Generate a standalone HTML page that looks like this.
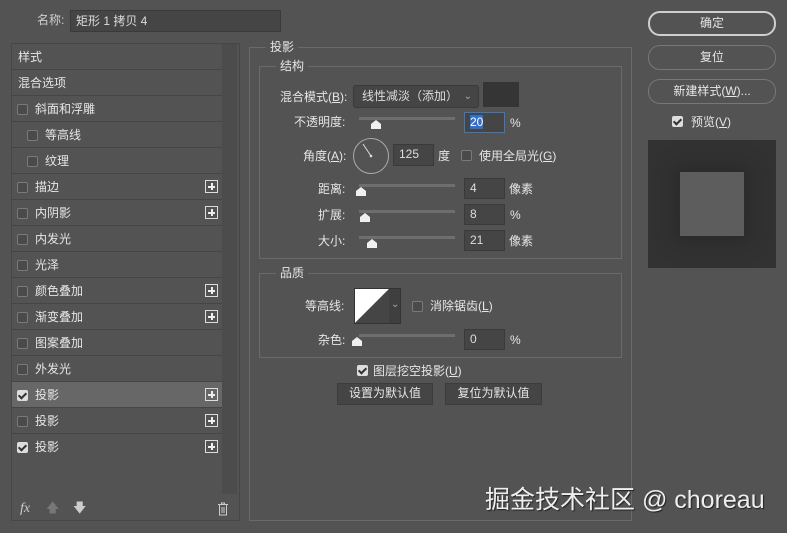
<!DOCTYPE html>
<html><head><meta charset="utf-8"><style>
*{box-sizing:border-box;margin:0;padding:0}
body{width:787px;height:533px;background:#535353;font-family:"Liberation Sans","Noto Sans CJK SC",sans-serif;font-size:12px;color:#e6e6e6;position:relative;overflow:hidden}
.a{position:absolute}
.t{position:absolute;white-space:nowrap;line-height:14px}
.inp{position:absolute;background:#454545;border:1px solid #3a3a3a;color:#ddd;padding-left:5px;line-height:19px;font-size:12px}
.row{position:absolute;left:12px;width:210px;height:26px;border-bottom:1px solid #454545;line-height:26px;padding-left:6px}
.cb{position:absolute;width:11px;height:11px;border:1px solid #7a7a7a;border-radius:2px;background:#4a4a4a}
.cbc{position:absolute;width:11px;height:11px;border-radius:2px;background:#ddd}
.cbc:after{content:"";position:absolute;left:3px;top:1px;width:3px;height:6px;border:solid #333;border-width:0 2px 2px 0;transform:rotate(45deg)}
.plus{position:absolute;right:4px;top:6px;width:13px;height:13px;border:1px solid #ddd}
.plus:before{content:"";position:absolute;left:2px;top:5px;width:7px;height:1.5px;background:#eee}
.plus:after{content:"";position:absolute;left:5px;top:2px;width:1.5px;height:7px;background:#eee}
.box{position:absolute;border:1px solid #6a6a6a}
.sl{position:absolute;height:3px;background:#6e6e6e;width:96px}
.th{position:absolute;width:0;height:0;border-left:5px solid transparent;border-right:5px solid transparent;border-bottom:4px solid #f0f0f0}
.th:after{content:"";position:absolute;left:-5px;top:4px;width:10px;height:5px;background:#f0f0f0}
.btn{position:absolute;border:1px solid #8a8a8a;border-radius:12px;text-align:center;line-height:22px;font-size:12px}
.b2{position:absolute;background:#454545;border:1px solid #3c3c3c;text-align:center;line-height:19px}
</style></head><body>
<div class="t" style="left:37px;top:13px;color:#cfcfcf">名称:</div>
<div class="inp" style="left:70px;top:10px;width:211px;height:22px;line-height:20px">矩形 1 拷贝 4</div>

<div class="a" style="left:11px;top:43px;width:229px;height:478px;border:1px solid #474747"></div>
<div class="a" style="left:222px;top:44px;width:15px;height:450px;background:#4c4c4c"></div>
<div class="row" style="top:44px">样式</div>
<div class="row" style="top:70px">混合选项</div>
<div class="row" style="top:96px"><span class="cb" style="left:5px;top:8px"></span><span style="padding-left:17px">斜面和浮雕</span></div>
<div class="row" style="top:122px"><span class="cb" style="left:15px;top:8px"></span><span style="padding-left:27px">等高线</span></div>
<div class="row" style="top:148px"><span class="cb" style="left:15px;top:8px"></span><span style="padding-left:27px">纹理</span></div>
<div class="row" style="top:174px"><span class="cb" style="left:5px;top:8px"></span><span style="padding-left:17px">描边</span><span class="plus"></span></div>
<div class="row" style="top:200px"><span class="cb" style="left:5px;top:8px"></span><span style="padding-left:17px">内阴影</span><span class="plus"></span></div>
<div class="row" style="top:226px"><span class="cb" style="left:5px;top:8px"></span><span style="padding-left:17px">内发光</span></div>
<div class="row" style="top:252px"><span class="cb" style="left:5px;top:8px"></span><span style="padding-left:17px">光泽</span></div>
<div class="row" style="top:278px"><span class="cb" style="left:5px;top:8px"></span><span style="padding-left:17px">颜色叠加</span><span class="plus"></span></div>
<div class="row" style="top:304px"><span class="cb" style="left:5px;top:8px"></span><span style="padding-left:17px">渐变叠加</span><span class="plus"></span></div>
<div class="row" style="top:330px"><span class="cb" style="left:5px;top:8px"></span><span style="padding-left:17px">图案叠加</span></div>
<div class="row" style="top:356px"><span class="cb" style="left:5px;top:8px"></span><span style="padding-left:17px">外发光</span></div>
<div class="row" style="top:382px;background:#676767"><span class="cbc" style="left:5px;top:8px"></span><span style="padding-left:17px">投影</span><span class="plus"></span></div>
<div class="row" style="top:408px"><span class="cb" style="left:5px;top:8px"></span><span style="padding-left:17px">投影</span><span class="plus"></span></div>
<div class="row" style="top:434px;border-bottom:none"><span class="cbc" style="left:5px;top:8px"></span><span style="padding-left:17px">投影</span><span class="plus"></span></div>
<div class="t" style="left:20px;top:502px;font-style:italic;font-family:'Liberation Serif',serif;font-size:14px;color:#ccc">fx</div>
<div class="t" style="left:46px;top:501px;color:#777;font-size:13px">🡅</div>
<div class="t" style="left:73px;top:501px;color:#ccc;font-size:13px">🡇</div>
<svg class="a" style="left:217px;top:502px" width="12" height="14"><path d="M1 2.5H11M4.5 2.5V1H7.5V2.5M2.5 3V13H9.5V3M5 5V11M7 5V11" stroke="#ccc" fill="none"/></svg>

<div class="box" style="left:249px;top:47px;width:383px;height:474px"></div>
<div class="t" style="left:266px;top:40px;background:#535353;padding:0 4px">投影</div>
<div class="box" style="left:259px;top:66px;width:363px;height:193px"></div>
<div class="t" style="left:276px;top:59px;background:#535353;padding:0 4px">结构</div>

<div class="t" style="left:280px;top:90px">混合模式(<u>B</u>):</div>
<div class="inp" style="left:353px;top:85px;width:126px;height:23px;line-height:21px;border-radius:3px;padding-left:8px">线性减淡（添加）<span style="position:absolute;right:6px;color:#aaa;font-size:10px">⌄</span></div>
<div class="a" style="left:483px;top:82px;width:36px;height:25px;background:#353535"></div>

<div class="t" style="left:294px;top:115px">不透明度:</div>
<div class="sl" style="left:359px;top:117px"></div><div class="th" style="left:371px;top:120px"></div>
<div class="inp" style="left:464px;top:112px;width:41px;height:21px;border-color:#3a78c0"><span style="background:#2f6fd0;color:#fff">20</span></div>
<div class="t" style="left:510px;top:116px">%</div>

<div class="t" style="left:303px;top:149px">角度(<u>A</u>):</div>
<svg class="a" style="left:352px;top:137px" width="38" height="38"><circle cx="19" cy="19" r="17.5" stroke="#aaa" fill="none"/><line x1="19" y1="19" x2="11" y2="7" stroke="#ddd"/><circle cx="19" cy="19" r="1.3" fill="#ddd"/></svg>
<div class="inp" style="left:393px;top:144px;width:41px;height:22px">125</div>
<div class="t" style="left:438px;top:149px">度</div>
<div class="cb" style="left:461px;top:150px"></div>
<div class="t" style="left:479px;top:149px">使用全局光(<u>G</u>)</div>

<div class="t" style="left:318px;top:182px">距离:</div>
<div class="sl" style="left:359px;top:184px"></div><div class="th" style="left:356px;top:187px"></div>
<div class="inp" style="left:464px;top:178px;width:41px;height:21px">4</div>
<div class="t" style="left:509px;top:182px">像素</div>

<div class="t" style="left:318px;top:208px">扩展:</div>
<div class="sl" style="left:359px;top:210px"></div><div class="th" style="left:360px;top:213px"></div>
<div class="inp" style="left:464px;top:204px;width:41px;height:21px">8</div>
<div class="t" style="left:510px;top:208px">%</div>

<div class="t" style="left:318px;top:234px">大小:</div>
<div class="sl" style="left:359px;top:236px"></div><div class="th" style="left:367px;top:239px"></div>
<div class="inp" style="left:464px;top:230px;width:41px;height:21px">21</div>
<div class="t" style="left:509px;top:234px">像素</div>

<div class="box" style="left:259px;top:273px;width:363px;height:85px"></div>
<div class="t" style="left:276px;top:266px;background:#535353;padding:0 4px">品质</div>
<div class="t" style="left:305px;top:299px">等高线:</div>
<div class="a" style="left:354px;top:288px;width:47px;height:36px;border:1px solid #333;background:#3f3f3f"></div>
<svg class="a" style="left:355px;top:289px" width="34" height="34"><polygon points="0,0 34,0 0,34" fill="#fff"/><polygon points="34,0 34,34 0,34" fill="#454545"/></svg>
<div class="t" style="left:391px;top:298px;color:#aaa;font-size:10px">⌄</div>
<div class="cb" style="left:412px;top:301px"></div>
<div class="t" style="left:430px;top:299px">消除锯齿(<u>L</u>)</div>
<div class="t" style="left:318px;top:333px">杂色:</div>
<div class="sl" style="left:359px;top:334px"></div><div class="th" style="left:352px;top:337px"></div>
<div class="inp" style="left:464px;top:329px;width:41px;height:21px">0</div>
<div class="t" style="left:510px;top:333px">%</div>

<div class="cbc" style="left:357px;top:365px"></div>
<div class="t" style="left:373px;top:364px">图层挖空投影(<u>U</u>)</div>
<div class="b2" style="left:337px;top:383px;width:96px;height:22px">设置为默认值</div>
<div class="b2" style="left:445px;top:383px;width:97px;height:22px">复位为默认值</div>

<div class="btn" style="left:648px;top:11px;width:128px;height:25px;border:2px solid #cfcfcf;line-height:21px">确定</div>
<div class="btn" style="left:648px;top:45px;width:128px;height:25px;border-color:#777">复位</div>
<div class="btn" style="left:648px;top:79px;width:128px;height:25px;border-color:#777">新建样式(<u>W</u>)...</div>
<div class="cbc" style="left:672px;top:116px"></div>
<div class="t" style="left:691px;top:115px">预览(<u>V</u>)</div>
<div class="a" style="left:648px;top:140px;width:128px;height:128px;background:#323232;overflow:hidden"><div class="a" style="left:32px;top:32px;width:64px;height:64px;background:#5d5d5d;box-shadow:0 0 16px 6px #2a2a2a"></div></div>

<div class="t" style="left:485px;top:486px;font-size:25px;line-height:28px;color:#eee;text-shadow:1px 1px 1px #222">掘金技术社区 @ choreau</div>
</body></html>
